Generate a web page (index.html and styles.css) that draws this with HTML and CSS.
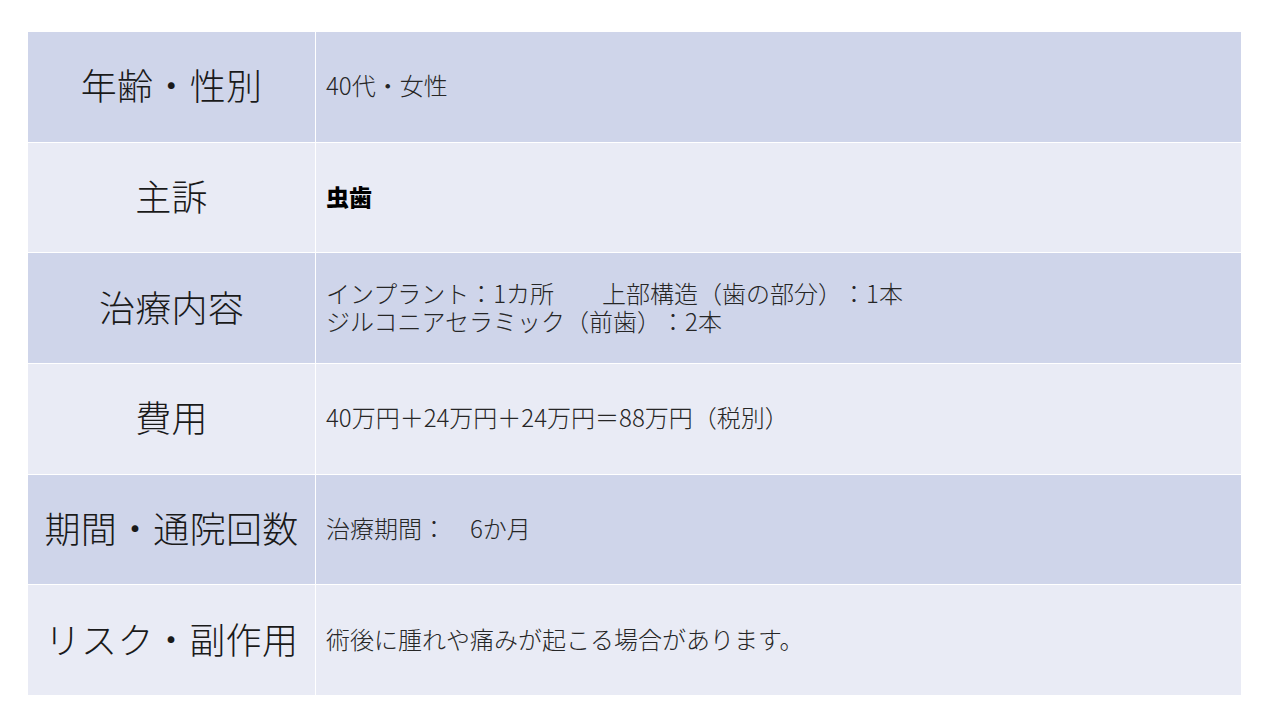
FILE: index.html
```html
<!DOCTYPE html>
<html lang="ja">
<head>
<meta charset="utf-8">
<title>治療概要</title>
<link rel="stylesheet" href="styles.css">
</head>
<body>
<div class="table">
  <div class="cell label band1">年齢・性別</div>
  <div class="cell value band1">40代・女性</div>

  <div class="cell label band2">主訴</div>
  <div class="cell value band2"><span class="strong">虫歯</span></div>

  <div class="cell label band1">治療内容</div>
  <div class="cell value band1"><p>インプラント：1カ所　　上部構造（歯の部分）：1本</p><p>ジルコニアセラミック（前歯）：2本</p></div>

  <div class="cell label band2">費用</div>
  <div class="cell value band2">40万円＋24万円＋24万円＝88万円（税別）</div>

  <div class="cell label band1">期間・通院回数</div>
  <div class="cell value band1">治療期間：　6か月</div>

  <div class="cell label band2">リスク・副作用</div>
  <div class="cell value band2">術後に腫れや痛みが起こる場合があります。</div>
</div>
</body>
</html>
```

FILE: styles.css
```css
html, body {
  margin: 0;
  padding: 0;
  background: #ffffff;
}
body {
  font-family: "Noto Sans CJK JP", "Noto Sans", sans-serif;
  color: #1f1f1f;
  text-spacing-trim: space-all;
}
.table {
  margin: 32px 0 0 28px;
  width: 1213px;
  height: 663px;
  display: grid;
  grid-template-columns: 287px 1fr;
  grid-template-rows: repeat(6, 1fr);
  gap: 1px;
  background: #ffffff;
}
.cell {
  display: flex;
  align-items: center;
  min-width: 0;
}
.band1 { background: #cfd5ea; }
.band2 { background: #e9ebf5; }
.label {
  justify-content: center;
  font-size: 36px;
  font-weight: 300;
  letter-spacing: 0.3px;
  color: #1a1a1a;
  white-space: nowrap;
  padding-bottom: 5px;
}
.value {
  flex-direction: column;
  align-items: flex-start;
  justify-content: center;
  padding-left: 10px;
  padding-bottom: 3px;
  font-size: 24px;
  line-height: 28px;
  font-weight: 300;
  color: #262626;
}
.value p {
  margin: 0;
}
.strong {
  font-weight: 900;
  font-size: 23px;
  color: #000000;
}
```
